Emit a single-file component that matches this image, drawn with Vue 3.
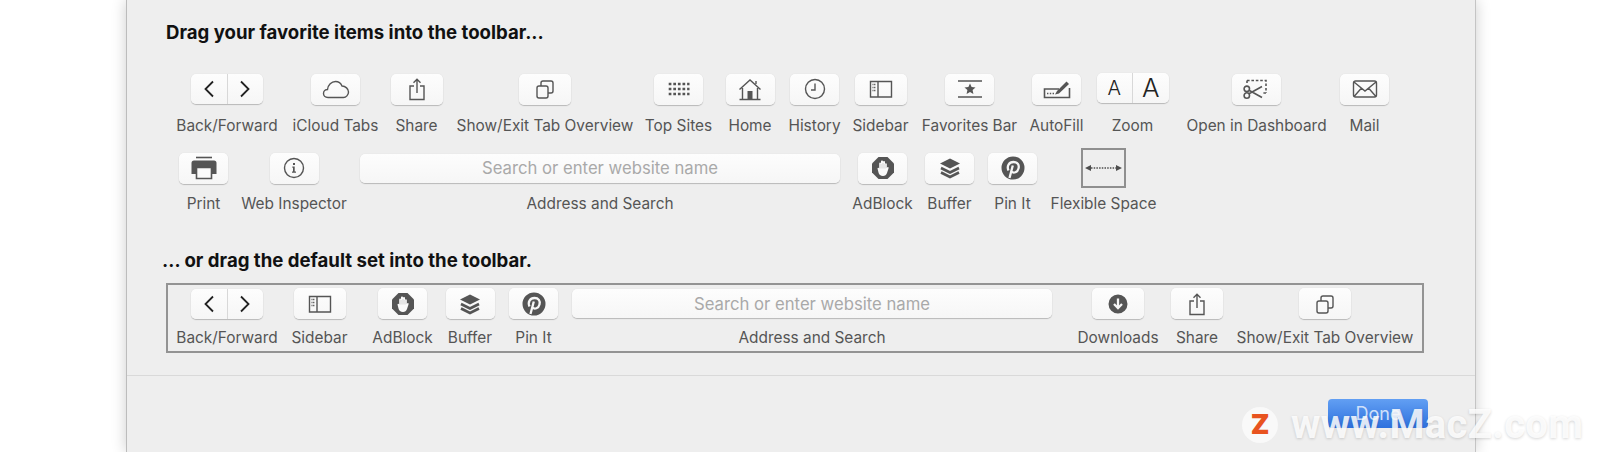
<script setup>
const star = 'M15 7.5l1.6 3.6 3.9.4-2.9 2.6.8 3.9-3.4-2-3.4 2 .8-3.9-2.9-2.6 3.9-.4z'
const icons = {
  cloud: [{ d: 'M7 21.5C4 21.5 2.5 19.5 2.5 17.5 2.5 15 4.5 13.5 6.5 13.5 7 9 10.5 5.5 14.5 5.5 17.5 5.5 20 7.5 21 10 24.5 10 27.5 13 27.5 16 27.5 19 25 21.5 22.5 21.5Z' }],
  share: [{ d: 'M12 10H8V23.5H22V10H18' }, { d: 'M15 17V3.5M11.5 6.8L15 3.3 18.5 6.8' }],
  tabs: [{ d: 'M7 12a2 2 0 0 1 2-2h7a2 2 0 0 1 2 2v8a2 2 0 0 1-2 2H9a2 2 0 0 1-2-2z' }, { d: 'M11 10V7a2 2 0 0 1 2-2h8a2 2 0 0 1 2 2v8a2 2 0 0 1-2 2h-3' }],
  sites: [{ d: 'M4.7 8H25.5M4.7 13H25.5M4.7 18H25.5', w: 2.7, dash: '2.7 1.9' }],
  home: [{ d: 'M4.5 13.5L15 4l10.5 9.5M21 8V5M7.5 12V23M22.5 12V23M4.5 23.5H25.5' }, { d: 'M12.5 15h5v8h-5z', f: 1 }],
  history: [{ d: 'M24.5 13a9.5 9.5 0 1 1-19 0 9.500 9.500 0 0 1 19 0zM15 7.500V14H11' }],
  sidebar: [{ d: 'M4.5 5.5H25.5V21H4.5ZM12 5.5V21' }, { d: 'M6.5 8.5H10M6.5 11.5H10M6.5 14.5H10', dash: '1 .6' }],
  favorites: [{ d: 'M3 5H27M3 21H27' }, { d: star, f: 1 }],
  autofill: [{ d: 'M17 13H2.5V21.5H27.5V12', w: 1.6 }, { d: 'M5 17.500H12', dash: '1.4 1.4' }, { d: 'M13 18.500L15 15 24.500 5.500 27 8 17 17.500z', f: 1 }],
  scissors: [{ d: 'M5 4.500H24V17M5 4.500V7M24 17H20', w: 1.6, dash: '2.600 1.800' }, { d: 'M6.500 14L20 21.500M6.500 18L20 10.500M7.500 12.800a2.700 2.700 0 1 1-5.400 0 2.700 2.700 0 0 1 5.400 0zM7.500 19.500a2.700 2.700 0 1 1-5.400 0 2.700 2.700 0 0 1 5.400 0z', w: 1.6 }],
  mail: [{ d: 'M5.5 5H24.500a2 2 0 0 1 2 2V19a2 2 0 0 1-2 2H5.500a2 2 0 0 1-2-2V7a2 2 0 0 1 2-2zM4 6L15 15 26 6M4.500 20L11.500 12M25.500 20L18.500 12' }],
  print: [{ d: 'M7 2.500H23', w: 1.6 }, { d: 'M5 5.500H25a2.500 2.500 0 0 1 2.500 2.500V19H2.500V8A2.500 2.500 0 0 1 5 5.500z', f: 1 }, { d: 'M7.500 12.500H22.500V23.500H7.500z', w: 1.6, white: 1 }],
  info: [{ d: 'M24.500 13a9.500 9.500 0 1 1-19 0 9.500 9.500 0 0 1 19 0z' }, { d: 'M13.300 11.500H15.700V16.500H17V17.800H13V16.500H14V12.800H13.300zM14 8h2v2h-2z', f: 1 }],
  adblock: [{ d: 'M10.500 2H19.500L26 8.500V17.500L19.500 24H10.500L4 17.500V8.500z', f: 1 }, { d: 'M9.500 13.500C9.500 12.500 11 12.500 11.200 13.500V8.500C11.200 7.300 13 7.300 13 8.500V6.500C13 5.300 15 5.300 15 6.500V6.800C15 5.800 17 5.800 17 7V9C17 8 18.800 8 18.800 9V13C19.500 11.500 21 12 20.500 13.500L19 18C18.300 20 17 21 15 21 12.500 21 11 19.800 10.500 17.500z', f: 1, white: 1, w: 0 }, { d: 'M13 9V13.500M15 8V13.500M17 9V13.500', w: 0.6, c: '#bbb' }],
  buffer: [{ d: 'M15 3.500L25 8.500 15 13.500 5 8.500z', f: 1 }, { d: 'M6 13L15 17.500 24 13M6 17.500L15 22 24 17.500', w: 2.600 }],
  pin: [{ d: 'M26.500 13a11.500 11.500 0 1 1-23 0 11.500 11.500 0 0 1 23 0z', f: 1 }, { d: 'M11.500 23L14.800 10.500M10.500 15.500C8.500 11 11 7 15.500 7 19.500 7 21.500 10 20.500 13.500 19.500 17.500 15.500 18.500 13.500 16.500', w: 2.300, c: '#f7f7f7' }],
  down: [{ d: 'M24.500 13a9.500 9.500 0 1 1-19 0 9.500 9.500 0 0 1 19 0z', f: 1 }, { d: 'M15 7.500V16.500M11 13L15 17.200 19 13', w: 2.300, c: '#f7f7f7' }]
}
const B = (label, icon, extra = {}) => ({ label, icon, ...extra })
const addr = { label: 'Address and Search', kind: 'address' }
const nav = { label: 'Back/Forward', kind: 'nav' }
const sections = [
  {
    title: 'Drag your favorite items into the toolbar...',
    cls: 'first',
    rows: [
      { cls: 'r1', items: [nav, B('iCloud Tabs', 'cloud'), B('Share', 'share', { wide: 1 }), B('Show/Exit Tab Overview', 'tabs', { wide: 1 }), B('Top Sites', 'sites'), B('Home', 'home'), B('History', 'history'), B('Sidebar', 'sidebar', { wide: 1 }), B('Favorites Bar', 'favorites'), B('AutoFill', 'autofill'), { label: 'Zoom', kind: 'zoom' }, B('Open in Dashboard', 'scissors'), B('Mail', 'mail')] },
      { cls: 'r2', items: [B('Print', 'print'), B('Web Inspector', 'info'), addr, B('AdBlock', 'adblock'), B('Buffer', 'buffer'), B('Pin It', 'pin'), { label: 'Flexible Space', kind: 'flex' }] }
    ]
  },
  {
    title: '… or drag the default set into the toolbar.',
    cls: 'second',
    rows: [
      { cls: 'r3', items: [nav, B('Sidebar', 'sidebar', { wide: 1 }), B('AdBlock', 'adblock'), B('Buffer', 'buffer'), B('Pin It', 'pin'), addr, B('Downloads', 'down', { wide: 1, gapBefore: 1 }), B('Share', 'share', { wide: 1 }), B('Show/Exit Tab Overview', 'tabs', { wide: 1 })] }
    ]
  }
]
</script>

<template>
  <div class="page">
    <main class="sheet">
      <section v-for="s in sections" :key="s.title" class="section" :class="s.cls">
        <h2 class="title">{{ s.title }}</h2>
        <div class="rows">
          <div v-for="row in s.rows" :key="row.cls" class="row" :class="row.cls">
            <div v-for="it in row.items" :key="it.label" class="item" :class="{ 'after-gap': it.gapBefore }">
              <div class="slot">
                <div v-if="it.kind === 'nav'" class="btn seg">
                  <span class="half">
                    <svg width="14" height="20" viewBox="0 0 14 20"><path d="M11 2.500L3.500 10 11 17.500" class="chev" /></svg>
                  </span>
                  <span class="half">
                    <svg width="14" height="20" viewBox="0 0 14 20"><path d="M3 2.500L10.500 10 3 17.500" class="chev" /></svg>
                  </span>
                </div>
                <div v-else-if="it.kind === 'zoom'" class="btn seg zoom">
                  <span class="half small-a">A</span>
                  <span class="half big-a">A</span>
                </div>
                <div v-else-if="it.kind === 'address'" class="btn address">Search or enter website name</div>
                <div v-else-if="it.kind === 'flex'" class="flexbox">
                  <svg width="41" height="36" viewBox="0 0 41 36">
                    <path d="M8 18H33" class="dots" />
                    <path d="M2 18L8 15V21zM39 18L33 15V21z" fill="#4d4d4d" />
                  </svg>
                </div>
                <div v-else class="btn" :class="{ wide: it.wide }">
                  <svg width="30" height="26" viewBox="0 0 30 26">
                    <path
                      v-for="(p, i) in icons[it.icon]"
                      :key="i"
                      :d="p.d"
                      :fill="p.white ? '#fafafa' : p.f ? '#555' : 'none'"
                      :stroke="p.f && !p.white ? 'none' : p.c || '#555'"
                      :stroke-width="p.w ?? 1.4"
                      :stroke-dasharray="p.dash"
                    />
                  </svg>
                </div>
              </div>
              <div class="label">{{ it.label }}</div>
            </div>
          </div>
        </div>
      </section>
      <footer class="footer">
        <button class="done">Done</button>
      </footer>
    </main>
    <div class="watermark">
      <span class="z-badge">Z</span>
      <span class="mark-text">www.MacZ.com</span>
    </div>
  </div>
</template>

<style>
html, body { margin: 0; background: #fff; overflow: hidden; }
</style>

<style scoped>
.page {
  position: relative;
  width: 1600px;
  height: 452px;
  overflow: hidden;
  background: #fff;
  font-family: Inter, "Noto Sans", sans-serif;
}
.sheet {
  width: 1350px;
  height: 452px;
  margin-left: 126px;
  box-sizing: border-box;
  background: #eeeeee;
  border-left: 1px solid #bcbcbc;
  border-right: 1px solid #c4c4c4;
  box-shadow: 0 0 14px rgba(0, 0, 0, 0.2);
}
.title {
  margin: 0;
  font-size: 18.6px;
  line-height: 22px;
  font-weight: 700;
  color: #111;
}
.first { padding: 21px 0 0 39px; }
.first .rows { margin: 26px 0 0 6px; display: flex; flex-direction: column; gap: 14px; }
.second { padding: 37px 0 0 35px; }
.second .rows {
  margin: 12px 0 0 4px;
  width: 1258px;
  height: 70px;
  box-sizing: border-box;
  border: 2px solid #939393;
  padding: 1px 0 0 4px;
}
.row { display: grid; }
.r1 { grid-template-columns: 110px 107px 55px 202px 65px 78px 51px 81px 97px 77px 75px 173px 43px; }
.r2 { grid-template-columns: 63px 118px 494px 71px 63px 63px 119px; }
.r3 { grid-template-columns: 110px 75px 91px 44px 83px 474px 29px 80px 78px 178px; }
.after-gap { grid-column-start: 8; }
.item {
  min-width: 0;
  display: flex;
  flex-direction: column;
  align-items: center;
}
.slot {
  height: 40px;
  display: flex;
  align-items: center;
  justify-content: center;
}
.r3 .slot { height: 35px; }
.label {
  margin-top: 8px;
  font-size: 15.4px;
  line-height: 16px;
  color: #555;
  white-space: nowrap;
}
.r1 .label, .r3 .label { margin-top: 9px; }
.r3 .item { margin-bottom: -1px; }
.btn {
  width: 49px;
  height: 31px;
  flex: none;
  display: flex;
  align-items: center;
  justify-content: center;
  box-sizing: border-box;
  border-radius: 5px;
  background: linear-gradient(#fdfdfd, #f6f6f6);
  box-shadow: 0 1px 1px rgba(0, 0, 0, 0.22), 0 0 1px rgba(0, 0, 0, 0.12);
}
.wide { width: 52px; }
.seg { width: 72px; height: 30px; }
.half {
  flex: 1;
  height: 100%;
  display: flex;
  align-items: center;
  justify-content: center;
}
.half + .half { border-left: 1px solid #d8d8d8; }
.chev { fill: none; stroke: #222; stroke-width: 1.8; }
.zoom { margin-bottom: 3px; color: #222; }
.small-a { font-size: 20px; font-weight: 300; }
.big-a { font-size: 26px; font-weight: 300; }
.address {
  width: 480px;
  height: 29px;
  font-size: 16.7px;
  color: #a9a9a9;
  white-space: nowrap;
}
.flexbox {
  width: 45px;
  height: 40px;
  box-sizing: border-box;
  border: 2px solid #8f8f8f;
  display: flex;
}
.dots { stroke: #4d4d4d; stroke-width: 1.4; stroke-dasharray: 1.5 1.2; fill: none; }
.footer {
  margin-top: 22px;
  border-top: 1px solid #d9d9d9;
  padding: 23px 47px 0 0;
  display: flex;
  justify-content: flex-end;
}
.done {
  width: 100px;
  height: 29px;
  padding: 0;
  border: 0;
  border-radius: 4px;
  background: linear-gradient(#629ff3, #2e71de);
  color: #cfe0fa;
  font-family: inherit;
  font-size: 18px;
}
.watermark {
  position: absolute;
  left: 1242px;
  top: 405px;
  display: flex;
  align-items: center;
  gap: 13px;
}
.z-badge {
  width: 36px;
  height: 36px;
  border-radius: 50%;
  background: rgba(250, 250, 250, 0.92);
  color: #e8531f;
  font: 900 27px/36px Inter, sans-serif;
  text-align: center;
}
.mark-text {
  font-family: Roboto, sans-serif;
  font-size: 40px;
  line-height: 40px;
  font-weight: 700;
  letter-spacing: 0.3px;
  color: rgba(255, 255, 255, 0.85);
  text-shadow: 0 1px 3px rgba(0, 0, 0, 0.16);
}
</style>
